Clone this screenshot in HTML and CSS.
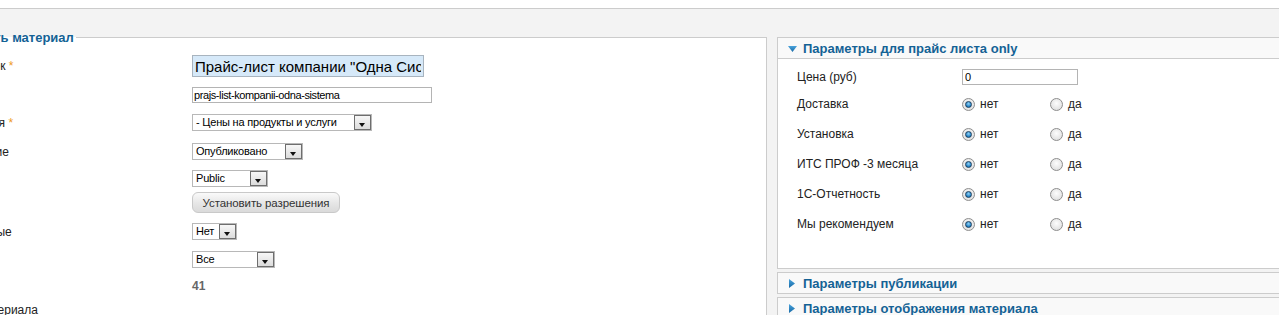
FILE: index.html
```html
<!DOCTYPE html>
<html lang="ru">
<head>
<meta charset="utf-8">
<title>Изменить материал</title>
<link rel="stylesheet" href="styles.css">
</head>
<body>
<div class="page">
  <div class="columns">
    <fieldset class="main">
      <legend>Изменить материал</legend>
      <ul class="form-list">
        <li class="row"><label>Заголовок <span class="star">*</span></label><input class="inp inp-title" type="text" value='Прайс-лист компании "Одна Система"'></li>
        <li class="row gap-10"><label>Алиас</label><input class="inp inp-alias" type="text" value="prajs-list-kompanii-odna-sistema"></li>
        <li class="row gap-11"><label>Категория <span class="star">*</span></label><span class="select w-cat"><span class="select-text">- Цены на продукты и услуги</span><span class="select-btn"></span></span></li>
        <li class="row gap-12"><label>Состояние</label><span class="select w-state"><span class="select-text">Опубликовано</span><span class="select-btn"></span></span></li>
        <li class="row gap-10"><label>Доступ</label><span class="select w-access"><span class="select-text">Public</span><span class="select-btn"></span></span></li>
        <li class="row gap-5"><label></label><button class="btn" type="button">Установить разрешения</button></li>
        <li class="row gap-10"><label>Избранные</label><span class="select w-feat"><span class="select-text">Нет</span><span class="select-btn"></span></span></li>
        <li class="row gap-11"><label>Язык</label><span class="select w-lang"><span class="select-text">Все</span><span class="select-btn"></span></span></li>
        <li class="row gap-11"><label>ID</label><span class="readonly">41</span></li>
        <li class="row gap-10"><label class="wide">Текст материала</label></li>
      </ul>
    </fieldset>

    <div class="sliders">
      <div class="panel">
        <h3 class="panel-title"><svg class="arrow-down" width="9" height="6" viewBox="0 0 9 6"><defs><linearGradient id="g1" x1="0" y1="0" x2="0" y2="1"><stop offset="0" stop-color="#4aa3dc"/><stop offset="1" stop-color="#1669a6"/></linearGradient></defs><polygon points="0,0 9,0 4.5,6" fill="url(#g1)"/></svg><span>Параметры для прайс листа only</span></h3>
        <div class="panel-body">
          <div class="prow prow-first"><span class="plabel">Цена (руб)</span><input class="inp inp-price" type="text" value="0"></div>
          <div class="prow"><span class="plabel">Доставка</span><span class="opt"><span class="radio checked"></span>нет</span><span class="opt"><span class="radio"></span>да</span></div>
          <div class="prow"><span class="plabel">Установка</span><span class="opt"><span class="radio checked"></span>нет</span><span class="opt"><span class="radio"></span>да</span></div>
          <div class="prow"><span class="plabel">ИТС ПРОФ -3 месяца</span><span class="opt"><span class="radio checked"></span>нет</span><span class="opt"><span class="radio"></span>да</span></div>
          <div class="prow"><span class="plabel">1С-Отчетность</span><span class="opt"><span class="radio checked"></span>нет</span><span class="opt"><span class="radio"></span>да</span></div>
          <div class="prow"><span class="plabel">Мы рекомендуем</span><span class="opt"><span class="radio checked"></span>нет</span><span class="opt"><span class="radio"></span>да</span></div>
        </div>
      </div>
      <div class="panel">
        <h3 class="panel-title"><svg class="arrow-right" width="6" height="9" viewBox="0 0 6 9"><defs><linearGradient id="g2" x1="0" y1="0" x2="0" y2="1"><stop offset="0" stop-color="#4aa3dc"/><stop offset="1" stop-color="#1669a6"/></linearGradient></defs><polygon points="0,0 6,4.5 0,9" fill="url(#g2)"/></svg><span>Параметры публикации</span></h3>
      </div>
      <div class="panel">
        <h3 class="panel-title"><svg class="arrow-right" width="6" height="9" viewBox="0 0 6 9"><polygon points="0,0 6,4.5 0,9" fill="url(#g2)"/></svg><span>Параметры отображения материала</span></h3>
      </div>
    </div>
  </div>
</div>
</body>
</html>
```

FILE: styles.css
```css
html, body {
  margin: 0;
  padding: 0;
  background: #fff;
  height: 315px;
  overflow: hidden;
  font-family: "Liberation Sans", Arial, sans-serif;
  font-size: 12px;
  color: #222;
}

.page {
  margin-top: 8px;
  border-top: 1px solid #ccc;
  background: #f3f3f3;
  padding-top: 20px;
  min-height: 400px;
}

.columns {
  display: flex;
  align-items: flex-start;
  gap: 10px;
  margin-left: -62px;
}

/* left fieldset */
.main {
  flex: none;
  box-sizing: border-box;
  width: 829px;
  min-height: 400px;
  margin: 0;
  padding: 9px 10px 20px 10px;
  border: 1px solid #ccc;
  background: #fff;
}

.main legend {
  margin-left: -3px;
  padding: 1px 2px 0 0;
  font-size: 13px;
  line-height: 16px;
  font-weight: bold;
  color: #146295;
}

.form-list {
  list-style: none;
  margin: 0;
  padding: 0;
}

.row {
  display: grid;
  grid-template-columns: 243px 1fr;
  align-items: center;
  justify-items: start;
}

.row label {
  font-size: 12px;
  line-height: 14px;
  color: #222;
  white-space: nowrap;
}

.row .wide {
  margin-left: -5px;
}

.gap-5 { margin-top: 5px; }
.gap-10 { margin-top: 10px; }
.gap-11 { margin-top: 11px; }
.gap-12 { margin-top: 12px; }

.star {
  color: #ee9a1f;
}

.inp {
  box-sizing: border-box;
  margin: 0;
  border: 1px solid #b4b4b4;
  background: #fff;
  font-family: "Liberation Sans", Arial, sans-serif;
  color: #000;
  outline: none;
  border-radius: 0;
}

.inp-title {
  width: 232px;
  height: 22px;
  padding: 0 2px;
  font-size: 15px;
  background: #d6e9f9;
  border-color: #a8b4bf;
}

.inp-alias {
  width: 240px;
  height: 16px;
  padding: 0 1px;
  font-size: 11px;
  letter-spacing: -0.4px;
}

.inp-price {
  width: 116px;
  height: 16px;
  padding: 0 2px;
  font-size: 11px;
}

/* custom select */
.select {
  box-sizing: border-box;
  display: inline-flex;
  height: 17px;
  border: 1px solid #b8b8b8;
  background: #fff;
  font-size: 11px;
  letter-spacing: -0.2px;
  color: #000;
}

.select-text {
  flex: 1;
  padding-left: 3px;
  line-height: 15px;
  white-space: nowrap;
}

.select-btn {
  position: relative;
  box-sizing: border-box;
  width: 17px;
  height: 15px;
  border: 1px solid #6e6e6e;
  background: linear-gradient(#f7f7f7, #dcdcdc);
}

.select-btn::after {
  content: "";
  position: absolute;
  left: 4px;
  top: 7px;
  border-left: 3.5px solid transparent;
  border-right: 3.5px solid transparent;
  border-top: 4px solid #111;
}

.w-cat { width: 180px; }
.w-state { width: 111px; }
.w-access { width: 76px; }
.w-feat { width: 45px; }
.w-lang { width: 83px; }

.btn {
  box-sizing: border-box;
  width: 148px;
  height: 21px;
  margin: 0;
  padding: 0;
  border: 1px solid #c9c9c9;
  border-radius: 6px;
  background: linear-gradient(#fafafa, #e6e6e6 55%, #dadada);
  font-family: "Liberation Sans", Arial, sans-serif;
  font-size: 11.5px;
  letter-spacing: -0.1px;
  color: #333;
}

.readonly {
  font-size: 12px;
  line-height: 14px;
  font-weight: bold;
  color: #666;
}

/* right sliders */
.sliders {
  flex: none;
  width: 560px;
  margin-top: 8px;
}

.panel {
  border: 1px solid #ccc;
  background: #fff;
  margin-bottom: 3px;
}

.panel-title {
  display: flex;
  align-items: center;
  height: 20px;
  margin: 0;
  padding: 1px 0 0 10px;
  box-sizing: border-box;
  background: #f9f9f9;
  font-size: 13px;
  font-weight: bold;
  color: #146295;
}

.panel .panel-title + .panel-body {
  border-top: 1px solid #ccc;
}

.arrow-down { margin-right: 6px; }
.arrow-right { margin: 0 8px 0 1px; }

.panel-body {
  height: 210px;
  padding: 8px 0 0 19px;
  box-sizing: border-box;
}

.prow {
  display: flex;
  align-items: center;
  height: 20px;
  margin-top: 10px;
}

.prow-first {
  margin-top: 0;
  margin-bottom: -3px;
}

.plabel {
  width: 165px;
  font-size: 12px;
  color: #222;
  white-space: nowrap;
}

.opt {
  display: inline-flex;
  align-items: center;
  width: 88px;
  font-size: 12px;
  color: #222;
}

.radio {
  position: relative;
  box-sizing: border-box;
  width: 13px;
  height: 13px;
  margin-right: 5px;
  border: 1px solid #8d8d8d;
  border-radius: 50%;
  background: radial-gradient(circle at 50% 40%, #fdfdfd, #d8d8d8);
}

.radio.checked::after {
  content: "";
  position: absolute;
  left: 2px;
  top: 2px;
  box-sizing: border-box;
  width: 7px;
  height: 7px;
  border-radius: 50%;
  border: 1px solid #1d3f5e;
  background: radial-gradient(circle at 50% 35%, #8fd0f5, #1f7fc2 70%);
}
```
